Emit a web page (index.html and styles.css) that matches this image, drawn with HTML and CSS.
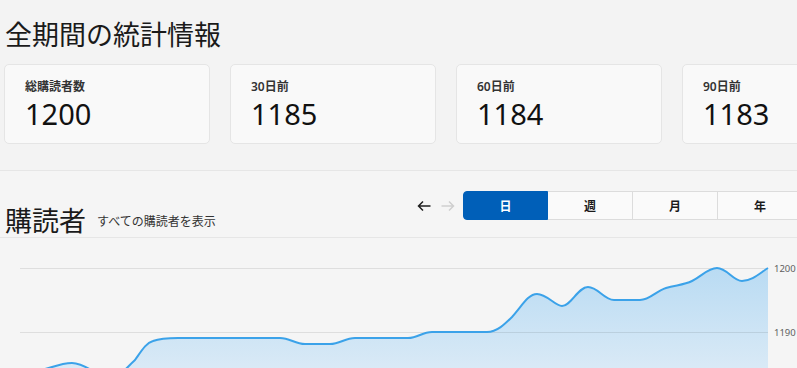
FILE: index.html
```html
<!DOCTYPE html>
<html lang="ja">
<head>
    <meta charset="UTF-8">
    <meta name="viewport" content="width=device-width, initial-scale=1.0">
    <title>統計情報</title>
    <link rel="stylesheet" href="styles.css">
</head>
<body>
    <div class="stats">
        <h1>全期間の統計情報</h1>
        <div class="cards">
            <div class="card">
                <div class="card-label">総購読者数</div>
                <div class="card-value">1200</div>
            </div>
            <div class="card">
                <div class="card-label">30日前</div>
                <div class="card-value">1185</div>
            </div>
            <div class="card">
                <div class="card-label">60日前</div>
                <div class="card-value">1184</div>
            </div>
            <div class="card">
                <div class="card-label">90日前</div>
                <div class="card-value">1183</div>
            </div>
        </div>
    </div>

    <div class="subs">
        <div class="subs-header">
            <div class="subs-title">
                <h2>購読者</h2>
                <a class="subs-link">すべての購読者を表示</a>
            </div>
            <div class="subs-controls">
                <div class="nav">
                    <svg class="nav-arrow" width="14" height="12" viewBox="0 0 14 12">
                        <path d="M13.5 6H1.5M6 1.5L1.5 6L6 10.5" fill="none" stroke="#1f1f1f" stroke-width="1.5"/>
                    </svg>
                    <svg class="nav-arrow" width="14" height="12" viewBox="0 0 14 12">
                        <path d="M0.5 6H12.5M8 1.5L12.5 6L8 10.5" fill="none" stroke="#cfcfcf" stroke-width="1.5"/>
                    </svg>
                </div>
                <div class="segments">
                    <button class="segment active">日</button>
                    <button class="segment">週</button>
                    <button class="segment">月</button>
                    <button class="segment">年</button>
                </div>
            </div>
        </div>

        <!-- グラフ（座標はページ基準） -->
        <svg class="chart" width="797" height="140" viewBox="0 239 797 140">
            <defs>
                <linearGradient id="fill" x1="0" y1="0" x2="0" y2="1">
                    <stop offset="0" stop-color="#b9dbf3"/>
                    <stop offset="1" stop-color="#e3eef7"/>
                </linearGradient>
            </defs>
            <path fill="url(#fill)" d="M20 374 C45 374 55 364 72 364 C85 364 95 376 110 379 C120 379 125 370 135 361 C142 351 146 344 153 342 C161 339 168 339 178 339 L280 339 C290 339 295 345 305 345 L330 345 C340 345 345 339 355 339 L408 339 C418 339 422 333 432 333 L487 333 C497 333 505 325 512 318 C522 307 528 295 537 295 C547 295 555 307 562 307 C571 307 578 288 588 288 C598 288 604 301 614 301 L640 301 C650 301 656 292 666 289 C676 286 684 286 692 282 C702 277 708 269 717 269 C727 269 733 282 742 282 C752 282 760 274 768 269 L768 400 L20 400 Z"/>
            <line x1="20" y1="269.5" x2="768" y2="269.5" stroke="rgba(0,0,0,0.09)"/>
            <line x1="20" y1="333.5" x2="768" y2="333.5" stroke="rgba(0,0,0,0.09)"/>
            <path fill="none" stroke="#3ba2e9" stroke-width="2" d="M20 374 C45 374 55 364 72 364 C85 364 95 376 110 379 C120 379 125 370 135 361 C142 351 146 344 153 342 C161 339 168 339 178 339 L280 339 C290 339 295 345 305 345 L330 345 C340 345 345 339 355 339 L408 339 C418 339 422 333 432 333 L487 333 C497 333 505 325 512 318 C522 307 528 295 537 295 C547 295 555 307 562 307 C571 307 578 288 588 288 C598 288 604 301 614 301 L640 301 C650 301 656 292 666 289 C676 286 684 286 692 282 C702 277 708 269 717 269 C727 269 733 282 742 282 C752 282 760 274 768 269"/>
            <text class="axis" x="774" y="272.5">1200</text>
            <text class="axis" x="774" y="336.5">1190</text>
        </svg>
    </div>
</body>
</html>
```

FILE: styles.css
```css
* {
    box-sizing: border-box;
    font-family: "Noto Sans", "Noto Sans CJK JP", sans-serif;
}

body {
    margin: 0;
    background: #f3f3f3;
    overflow: hidden;
    color: #1a1a1a;
}

.stats {
    padding: 17px 4px 0;
    border-bottom: 1px solid #e6e6e6;
}

h1 {
    margin: 0;
    font-size: 27px;
    font-weight: 400;
    line-height: 36px;
    padding-left: 1px;
}

.cards {
    display: flex;
    gap: 20px;
    margin-top: 11px;
    padding-bottom: 26px;
}

.card {
    flex: 0 0 206px;
    height: 80px;
    padding: 15px 20px 0;
    background: #f9f9f9;
    border: 1px solid #e5e5e5;
    border-radius: 5px;
}

.card-label {
    font-size: 12px;
    line-height: 14px;
    font-weight: 600;
    color: #333;
}

.card-value {
    font-size: 29px;
    line-height: 40px;
    color: #111;
}

.subs {
    background: #f5f5f5;
}

.subs-header {
    display: flex;
    width: 803px;
    height: 67px;
    padding: 20px 0 0 4px;
    border-bottom: 1px solid #e6e6e6;
}

.subs-title {
    display: flex;
    align-items: center;
    align-self: flex-end;
    gap: 11px;
}

h2 {
    margin: 0;
    font-size: 27px;
    font-weight: 400;
    line-height: 32px;
    padding-left: 1px;
}

.subs-link {
    font-size: 12px;
    color: #333;
}

.subs-controls {
    display: flex;
    align-items: flex-start;
    margin-left: auto;
}

.nav {
    display: flex;
    gap: 10px;
    height: 29px;
    align-items: center;
    margin-right: 8px;
}

.nav-arrow {
    display: block;
}

.segments {
    display: flex;
}

.segment {
    width: 85px;
    height: 29px;
    padding: 0;
    background: #fafafa;
    border: 1px solid #dcdcdc;
    border-left-width: 0;
    font-size: 12px;
    font-weight: 700;
    color: #1a1a1a;
}

.segment.active {
    background: #005fb8;
    border-color: #005fb8;
    border-left-width: 1px;
    border-radius: 4px 0 0 4px;
    color: white;
}

.chart {
    display: block;
}

.axis {
    font-size: 9.5px;
    fill: #5f5f5f;
}
```
